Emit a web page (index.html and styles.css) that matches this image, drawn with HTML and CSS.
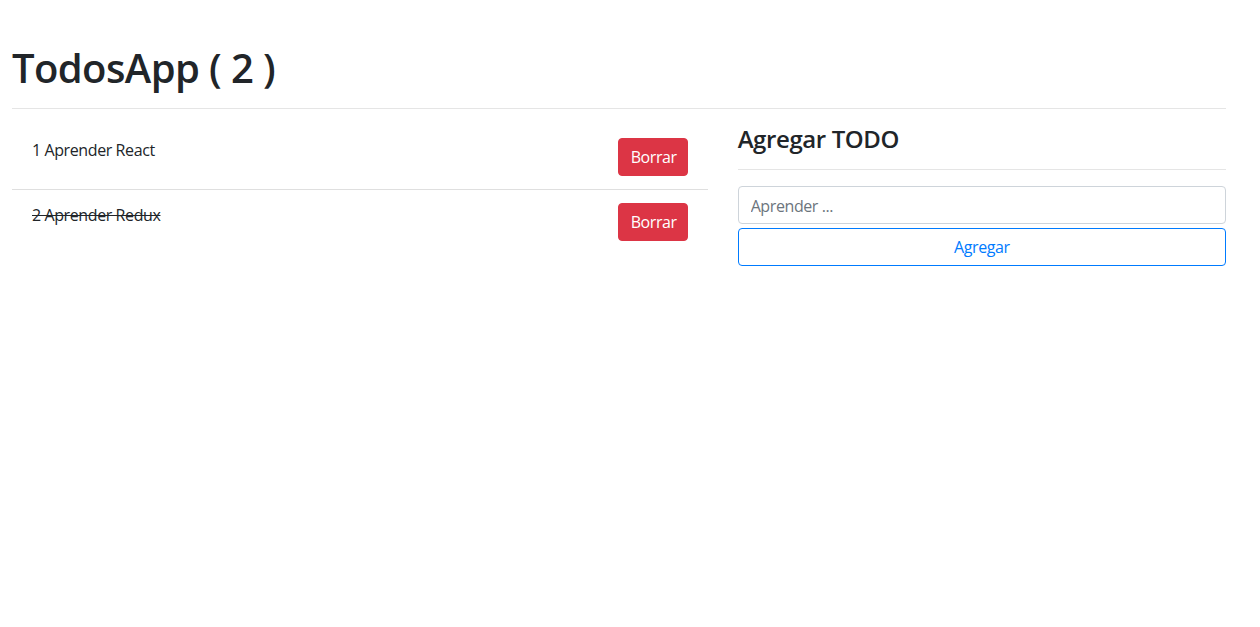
FILE: index.html
```html
<!DOCTYPE html>
<html lang="es">
<head>
<meta charset="utf-8">
<title>TodosApp</title>
<link rel="stylesheet" href="styles.css">
</head>
<body>
<div class="container">
  <h1 class="title">TodosApp ( 2 )</h1>
  <hr class="divider">
  <div class="row">
    <div class="col col-list">
      <ul class="todo-list">
        <li class="todo-item">
          <p class="todo-text">1 Aprender React</p>
          <button class="btn btn-danger">Borrar</button>
        </li>
        <li class="todo-item">
          <p class="todo-text done">2 Aprender Redux</p>
          <button class="btn btn-danger">Borrar</button>
        </li>
      </ul>
    </div>
    <div class="col col-form">
      <h4 class="form-title">Agregar TODO</h4>
      <hr class="divider">
      <form class="todo-form">
        <input class="form-control" type="text" placeholder="Aprender ...">
        <button class="btn btn-outline-primary btn-block" type="button">Agregar</button>
      </form>
    </div>
  </div>
</div>
</body>
</html>
```
FILE: styles.css
```css
* { box-sizing: border-box; }

body {
  margin: 0;
  font-family: "Open Sans", "Noto Sans", sans-serif;
  font-size: 16px;
  line-height: 24px;
  color: #212529;
  background: #fff;
}

.container {
  padding: 44px 34px 0 12px;
}

.title {
  margin: 0;
  font-size: 40px;
  line-height: 48px;
  font-weight: 600;
  letter-spacing: -0.6px;
}

.divider {
  margin: 16px 0;
  border: 0;
  border-top: 1px solid rgba(0, 0, 0, 0.1);
  height: 0;
}

.row {
  display: flex;
  margin: 0 -15px;
}

.col {
  padding: 0 15px;
}

.col-list { flex: 0 0 58.3333%; }
.col-form { flex: 0 0 41.6667%; }

.todo-list {
  list-style: none;
  margin: 0;
  padding: 0;
}

.todo-item {
  display: flex;
  justify-content: space-between;
  align-items: flex-start;
  padding: 12px 20px 13px;
  border-bottom: 1px solid rgba(0, 0, 0, 0.125);
}

.todo-item:last-child { border-bottom: 0; }

.todo-text {
  margin: 1px 0 0;
  letter-spacing: -0.4px;
}

.todo-text.done { text-decoration: line-through; }

.btn {
  font-family: inherit;
  font-size: 16px;
  line-height: 24px;
  padding: 6px 12px;
  border: 1px solid transparent;
  border-radius: 4px;
  cursor: pointer;
  letter-spacing: -0.4px;
}

.btn-danger {
  width: 70px;
  margin-top: 1px;
  color: #fff;
  background: #dc3545;
  border-color: #dc3545;
}

.form-title {
  margin: 0;
  font-size: 24px;
  line-height: 28px;
  font-weight: 600;
  letter-spacing: -0.4px;
}

.todo-form {
  display: flex;
  flex-direction: column;
  gap: 4px;
}

.form-control {
  display: block;
  width: 100%;
  height: 38px;
  padding: 7px 12px 5px;
  font-family: inherit;
  font-size: 16px;
  line-height: 24px;
  color: #495057;
  background: #fff;
  border: 1px solid #ced4da;
  border-radius: 4px;
  letter-spacing: -0.4px;
}

.form-control::placeholder { color: #6c757d; opacity: 1; }

.btn-outline-primary {
  color: #007bff;
  background: transparent;
  border-color: #007bff;
}

.btn-block {
  display: block;
  width: 100%;
}
```
